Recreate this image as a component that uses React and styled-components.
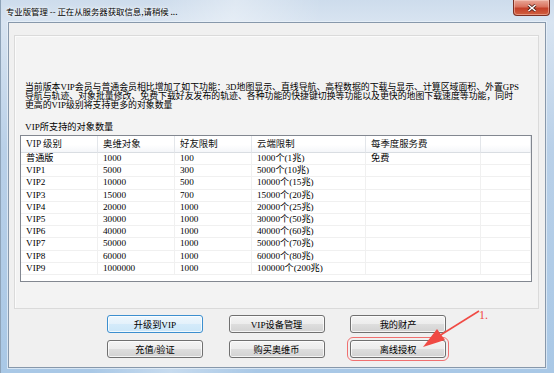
import React from "react";
import styled, { createGlobalStyle } from "styled-components";

const rows = [
  ["普通版", "1000", "100", "1000个(1兆)", "免费"],
  ["VIP1", "5000", "300", "5000个(10兆)", ""],
  ["VIP2", "10000", "500", "10000个(15兆)", ""],
  ["VIP3", "15000", "700", "15000个(20兆)", ""],
  ["VIP4", "20000", "1000", "20000个(25兆)", ""],
  ["VIP5", "30000", "1000", "30000个(50兆)", ""],
  ["VIP6", "40000", "1000", "40000个(60兆)", ""],
  ["VIP7", "50000", "1000", "50000个(70兆)", ""],
  ["VIP8", "60000", "1000", "60000个(80兆)", ""],
  ["VIP9", "1000000", "1000", "100000个(200兆)", ""],
];

const headers = ["VIP 级别", "奥维对象", "好友限制", "云端限制", "每季度服务费", ""];

const lines = [
  "当前版本VIP会员与普通会员相比增加了如下功能：3D地图显示、直线导航、高程数据的下载与显示、计算区域面积、外置GPS",
  "导航与轨迹、对象批量修改、免费下载好友发布的轨迹、各种功能的快捷键切换等功能以及更快的地图下载速度等功能，同时",
  "更高的VIP级别将支持更多的对象数量",
];

const App = () => {
  return (
    <>
      <GlobalStyle />
      <Window>
        <TitleBar>
          <Title>专业版管理 -- 正在从服务器获取信息,请稍候 ...</Title>
          <CloseButton>
            <svg width="10" height="8" viewBox="0 0 10 8">
              <path d="M1.5 1 L8.5 7 M8.5 1 L1.5 7" stroke="#4a1c14" strokeWidth="3" />
              <path d="M1.5 1 L8.5 7 M8.5 1 L1.5 7" stroke="#fff" strokeWidth="1.6" />
            </svg>
          </CloseButton>
        </TitleBar>
        <Client>
          <Group>
            <Intro>
              {lines.map((l) => (
                <Line key={l}>{l}</Line>
              ))}
            </Intro>
            <Label>VIP所支持的对象数量</Label>
            <Table>
              {headers.map((h, i) => (
                <HeadCell key={i}>{h}</HeadCell>
              ))}
              {rows.map((r) =>
                [...r, ""].map((c, i) => <Cell key={r[0] + i}>{c}</Cell>)
              )}
            </Table>
          </Group>
          <Buttons>
            <Button $primary>升级到VIP</Button>
            <Button>VIP设备管理</Button>
            <Button>我的财产</Button>
            <Button>充值/验证</Button>
            <Button>购买奥维币</Button>
            <Button $marked>离线授权</Button>
          </Buttons>
        </Client>
        <Annotation width="554" height="373" viewBox="0 0 554 373">
          <line x1="478" y1="311" x2="438" y2="336" stroke="#f04a44" strokeWidth="1.6" />
          <polygon points="422,347 444,340 436,329" fill="#f04a44" />
          <text x="478" y="319" fill="#f04a44" fontSize="12" fontFamily="Liberation Serif, serif">
            1.
          </text>
        </Annotation>
      </Window>
    </>
  );
};

export default App;

const GlobalStyle = createGlobalStyle`
  html, body {
    margin: 0;
    padding: 0;
    background: #fff;
  }
  body {
    width: 554px;
    height: 373px;
    overflow: hidden;
    font-family: "Liberation Serif", "Noto Sans CJK SC", serif;
  }
`;

const Window = styled.div`
  position: relative;
  width: 554px;
  height: 373px;
  box-sizing: border-box;
  display: flex;
  flex-direction: column;
  padding: 0 8px 5px 7px;
  background: linear-gradient(100deg, rgba(255, 255, 255, 0) 25%, rgba(255, 255, 255, 0.35) 38%, rgba(255, 255, 255, 0) 52%),
    linear-gradient(180deg, #cddcec 0%, #d8e4f1 6%, #b9d0e8 40%, #a9c8e6 100%);
  border-left: 1px solid #8ea3b8;
`;

const TitleBar = styled.div`
  height: 22px;
  display: flex;
  justify-content: space-between;
  align-items: flex-start;
  margin: 0 -4px 0 -2px;
`;

const Title = styled.div`
  font-family: "Noto Sans CJK SC", sans-serif;
  font-size: 8.4px;
  line-height: 22px;
  color: #000;
  white-space: nowrap;
  text-shadow: 0 0 5px #fff, 0 0 3px #fff;
`;

const CloseButton = styled.div`
  width: 37px;
  height: 16px;
  box-sizing: border-box;
  display: flex;
  align-items: center;
  justify-content: center;
  border: 1px solid #7b2f23;
  border-top: none;
  border-radius: 0 0 4px 4px;
  background: linear-gradient(180deg, #e9a899 0%, #d9735f 45%, #c4402a 55%, #d1603f 100%);
  box-shadow: inset 0 0 0 1px rgba(255, 220, 210, 0.45);
`;

const Client = styled.div`
  flex: 1;
  display: flex;
  flex-direction: column;
  background: #f0f0f0;
  border: 1px solid #8798ab;
  box-shadow: 0 0 0 1px rgba(235, 242, 250, 0.7);
`;

const Group = styled.div`
  height: 274px;
  box-sizing: border-box;
  margin: 12px 6px 0 5px;
  padding: 47px 6px 0 5px;
  border: 1px solid #dadada;
  background: #f3f3f3;
  box-shadow: inset 1px 1px 0 #fbfbfb;
`;

const Intro = styled.div`
  padding-left: 5px;
  font-size: 8.9px;
  line-height: 9px;
  color: #000;
`;

const Line = styled.div`
  white-space: nowrap;
`;

const Label = styled.div`
  padding-left: 5px;
  margin-top: 11px;
  font-size: 9.2px;
  line-height: 12px;
  color: #000;
`;

const Table = styled.div`
  margin-top: 2px;
  height: 147px;
  box-sizing: border-box;
  display: grid;
  grid-template-columns: 77px 77px 77px 114px 115px 1fr;
  grid-template-rows: 17px;
  grid-auto-rows: 12.2px;
  align-content: start;
  border: 1px solid #828790;
  background: #fff;
`;

const HeadCell = styled.div`
  box-sizing: border-box;
  padding-left: 5px;
  font-size: 9.4px;
  line-height: 16px;
  color: #111;
  white-space: nowrap;
  background: linear-gradient(180deg, #ffffff 0%, #ffffff 55%, #f4f6f9 100%);
  border-right: 1px solid #e3e6ea;
  border-bottom: 1px solid #d9dde2;
`;

const Cell = styled.div`
  box-sizing: border-box;
  padding-left: 5px;
  font-size: 9.2px;
  line-height: 11.2px;
  color: #000;
  white-space: nowrap;
  overflow: hidden;
  border-right: 1px solid #f0f0f0;
  border-bottom: 1px solid #f0f0f0;
`;

const Buttons = styled.div`
  display: grid;
  grid-template-columns: repeat(3, 96px);
  grid-auto-rows: 18px;
  column-gap: 25.5px;
  row-gap: 7px;
  margin: 6px 0 0 98px;
`;

const Button = styled.button`
  width: 96px;
  height: 18px;
  padding: 0;
  font-family: "Liberation Serif", "Noto Sans CJK SC", serif;
  font-size: 9.2px;
  color: #000;
  border: 1px solid ${(p) => (p.$primary ? "#3c8fcf" : "#707070")};
  border-radius: 3px;
  background: ${(p) =>
    p.$primary
      ? "linear-gradient(180deg, #eef7fd 0%, #e3f1fb 50%, #d4ebfa 51%, #cbe6f8 100%)"
      : "linear-gradient(180deg, #f4f4f4 0%, #ececec 50%, #dedede 51%, #d2d2d2 100%)"};
  box-shadow: inset 0 0 0 1px rgba(255, 255, 255, 0.75);
  outline: ${(p) => (p.$marked ? "1px solid #f07070" : "none")};
  outline-offset: 2px;
`;

const Annotation = styled.svg`
  position: absolute;
  top: 0;
  left: 0;
  pointer-events: none;
`;
